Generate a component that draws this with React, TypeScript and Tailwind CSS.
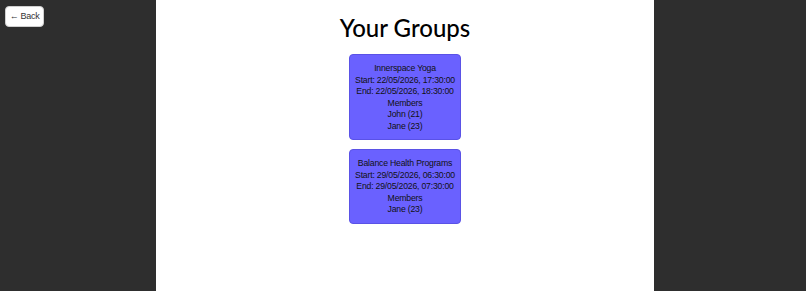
import React from 'react'

type Group = {
  name: string
  start: string
  end: string
  members: string[]
}

const groups: Group[] = [
  {
    name: 'Innerspace Yoga',
    start: '22/05/2026, 17:30:00',
    end: '22/05/2026, 18:30:00',
    members: ['John (21)', 'Jane (23)'],
  },
  {
    name: 'Balance Health Programs',
    start: '29/05/2026, 06:30:00',
    end: '29/05/2026, 07:30:00',
    members: ['Jane (23)'],
  },
]

const small = { fontFamily: '"Liberation Sans", Arial, sans-serif' }

export default function App() {
  return (
    <div
      className="relative min-h-[291px] h-screen bg-[#2e2e2e] text-black"
      style={{ fontFamily: '"Lato", "Noto Sans", sans-serif' }}
    >
      <button
        className="absolute left-[5px] top-[6px] h-[21px] w-[39px] bg-white rounded-[4px] border border-[#d0d0d0] text-[9px] tracking-[-0.3px] leading-none whitespace-nowrap text-[#333]"
        style={small}
      >
        ← Back
      </button>

      <div className="ml-[156px] w-[498px] h-full bg-white flex flex-col items-center">
        <h1 className="mt-[13px] text-[24px] font-medium leading-[30px]">Your Groups</h1>

        <div className="mt-[11px] flex flex-col items-center gap-[9px]">
          {groups.map((g) => (
            <div
              key={g.name}
              className="w-[112px] bg-[#6a61ff] border border-[#5a52e6] rounded-[4px] pt-[8px] pb-[7px] text-center text-[8.7px] tracking-[-0.2px] leading-[11.5px] whitespace-nowrap text-[#111]"
              style={small}
            >
              <div>{g.name}</div>
              <div>Start: {g.start}</div>
              <div>End: {g.end}</div>
              <div>Members</div>
              {g.members.map((m) => (
                <div key={m}>{m}</div>
              ))}
            </div>
          ))}
        </div>
      </div>
    </div>
  )
}
